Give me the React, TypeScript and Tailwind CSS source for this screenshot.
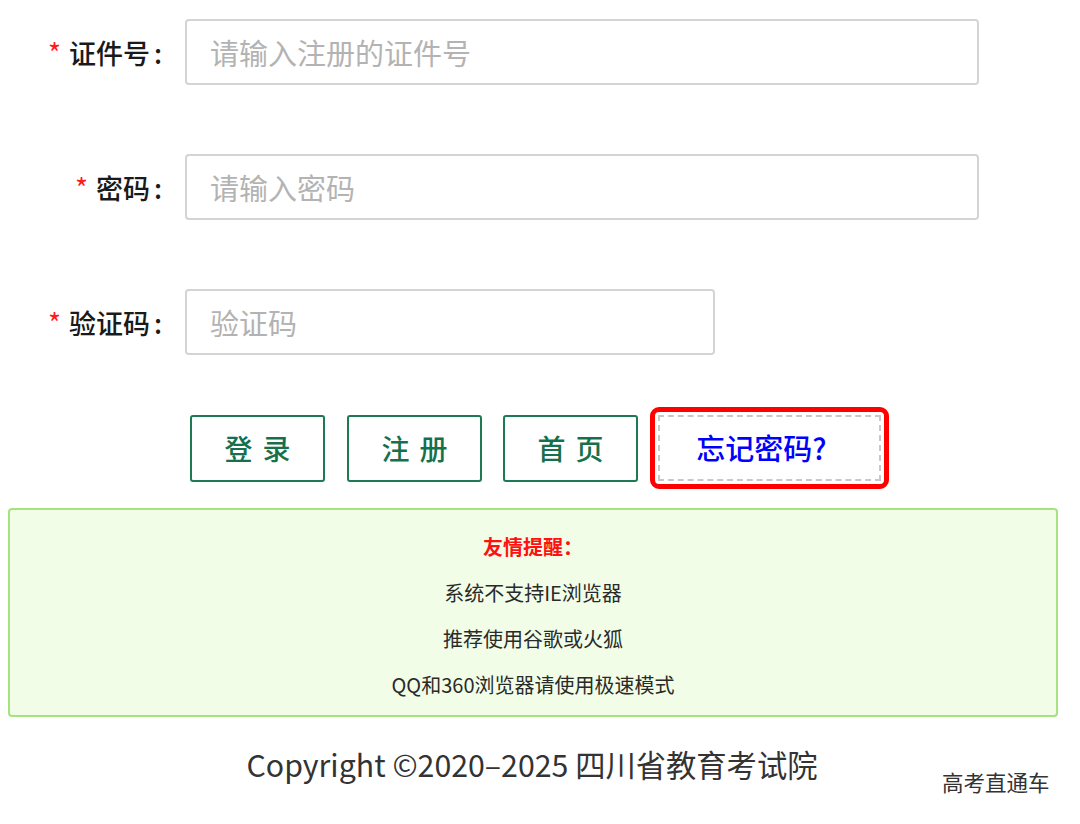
import React from "react"

const font = { fontFamily: '"Noto Sans CJK SC", "Noto Sans", sans-serif' }

function Field({ label, placeholder, width }: { label: string; placeholder: string; width: string }) {
  return (
    <div className="flex items-center">
      <label className="flex w-[185px] items-center justify-end pr-[23px] text-[27px] font-medium leading-none text-[#1a1a1a]">
        <span className="mr-[8px] text-[28px] font-normal text-[#ff1a1a]">*</span>
        <span>{label}</span>
        <span className="ml-[4px]">:</span>
      </label>
      <input
        placeholder={placeholder}
        className={`${width} h-[66px] rounded-[4px] border-2 border-[#d4d4d4] bg-white px-[23px] text-[29px] text-[#333] outline-none placeholder:text-[#b3b3b3]`}
      />
    </div>
  )
}

function GreenButton({ text }: { text: string }) {
  return (
    <button className="flex h-[67px] w-[135px] items-center justify-center rounded-[3px] border-2 border-[#1d7a55] bg-white pl-[10px] text-[28px] font-medium tracking-[10px] text-[#17704c]">
      {text}
    </button>
  )
}

export default function App() {
  return (
    <div className="relative h-[824px] w-[1080px] overflow-hidden bg-white" style={font}>
      {/* login form */}
      <div className="flex flex-col gap-[69px] pt-[19px]">
        <Field label="证件号" placeholder="请输入注册的证件号" width="w-[794px]" />
        <Field label="密码" placeholder="请输入密码" width="w-[794px]" />
        <Field label="验证码" placeholder="验证码" width="w-[530px]" />
      </div>

      <div className="mt-[52px] flex items-center pl-[190px]">
        <GreenButton text="登录" />
        <div className="w-[22px]" />
        <GreenButton text="注册" />
        <div className="w-[21px]" />
        <GreenButton text="首页" />
        <div className="ml-[12px] flex h-[82px] w-[239px] items-center justify-center rounded-[9px] border-[5px] border-[#ff0000] p-[3px]">
          <div className="flex h-full w-full items-center justify-center border-2 border-dashed border-[#c8c8c8] pr-[16px] text-[29px] font-medium text-[#0000ff]">
            忘记密码?
          </div>
        </div>
      </div>

      {/* tips */}
      <div className="mx-[8px] mt-[19px] flex h-[209px] w-[1050px] flex-col items-center rounded-[4px] border-2 border-[#a6e27e] bg-[#f1fde7] pt-[14px] text-[20px] leading-[46px] text-[#2a2a2a]">
        <div className="font-bold text-[#ff1111]">友情提醒：</div>
        <div>系统不支持IE浏览器</div>
        <div>推荐使用谷歌或火狐</div>
        <div>QQ和360浏览器请使用极速模式</div>
      </div>

      <div className="mt-[22px] pr-[16px] text-center text-[30.3px] leading-[50px] text-[#333]">
        Copyright ©2020–2025 四川省教育考试院
      </div>

      <div className="absolute left-[942px] top-[769px] text-[21.5px] leading-[26px] text-[#333]">高考直通车</div>
    </div>
  )
}
